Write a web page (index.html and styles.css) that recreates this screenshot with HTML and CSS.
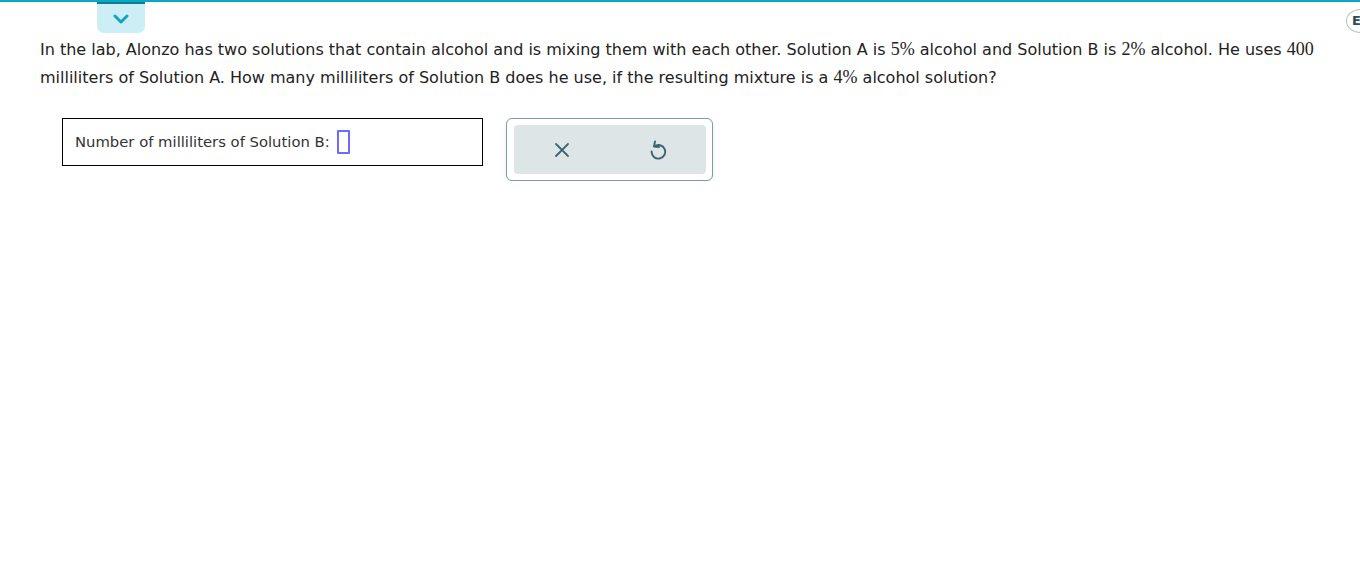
FILE: index.html
```html
<!DOCTYPE html>
<html>
<head>
<meta charset="utf-8">
<link rel="stylesheet" href="styles.css">
</head>
<body>
<div class="topbar">
  <div class="tab">
    <svg width="16" height="10" viewBox="0 0 16 10"><path d="M2 2 L8 8 L14 2" fill="none" stroke="#12a5c3" stroke-width="3" stroke-linecap="round" stroke-linejoin="round"/></svg>
  </div>
  <div class="badge">E</div>
</div>
<main class="content">
  <p class="question">In the lab, Alonzo has two solutions that contain alcohol and is mixing them with each other. Solution A is <span class="m">5%</span> alcohol and Solution B is <span class="m">2%</span> alcohol. He uses <span class="m">400</span> milliliters of Solution A. How many milliliters of Solution B does he use, if the resulting mixture is a <span class="m">4%</span> alcohol solution?</p>
  <div class="answer-row">
    <div class="answer-box">
      <span class="label">Number of milliliters of Solution B:</span>
      <span class="input"></span>
    </div>
    <div class="tools">
      <div class="tools-inner">
        <svg width="16" height="16" viewBox="0 0 16 16"><path d="M2 2 L14 14 M14 2 L2 14" stroke="#3d6472" stroke-width="1.8" fill="none" stroke-linecap="round"/></svg>
        <svg width="18" height="20" viewBox="0 0 18 20"><path d="M6 1.5 L5 6.5 L10 7" fill="none" stroke="#3d6472" stroke-width="1.9" stroke-linecap="round" stroke-linejoin="round"/><path d="M5.4 6.3 A6.8 6.8 0 1 1 2.6 11.5" fill="none" stroke="#3d6472" stroke-width="1.9" stroke-linecap="round"/></svg>
      </div>
    </div>
  </div>
</main>
</body>
</html>
```
FILE: styles.css
```css
html, body {
  margin: 0;
  padding: 0;
  background: #fff;
}
body {
  font-family: "DejaVu Sans", Verdana, sans-serif;
  color: #222;
}
.topbar {
  position: relative;
  height: 34px;
  border-top: 2px solid #0aa8c4;
}
.tab {
  position: absolute;
  left: 97px;
  top: 0;
  width: 48px;
  height: 31px;
  background: #cdeef4;
  border-top: 2px solid #0b7f93;
  box-sizing: border-box;
  border-radius: 0 0 7px 7px;
  display: flex;
  align-items: center;
  justify-content: center;
}
.badge {
  position: absolute;
  left: 1346px;
  top: 7px;
  width: 22px;
  height: 22px;
  border: 1px solid #b5c3c8;
  border-radius: 50%;
  font-size: 13px;
  font-weight: bold;
  color: #2e4a55;
  line-height: 22px;
  padding-left: 5px;
  box-sizing: content-box;
}
.content {
  padding: 0 40px;
}
.question {
  margin: 0;
  font-size: 16px;
  line-height: 28px;
  color: #222;
}
.m {
  font-family: "Liberation Serif", "Times New Roman", serif;
  font-size: 18px;
  line-height: 1;
}
.answer-row {
  display: flex;
  align-items: flex-start;
  gap: 23px;
  margin-top: 26px;
  padding-left: 22px;
}
.answer-box {
  width: 421px;
  height: 48px;
  box-sizing: border-box;
  border: 1px solid #000;
  display: flex;
  align-items: center;
  padding-left: 12px;
  gap: 7px;
}
.label {
  font-size: 14.8px;
  color: #333;
  margin-top: -2px;
}
.input {
  width: 9px;
  height: 20px;
  border: 2px solid #6b6bff;
  border-radius: 1px;
}
.tools {
  width: 207px;
  height: 63px;
  box-sizing: border-box;
  border: 1px solid #7d9ca6;
  border-radius: 6px;
  background: #fff;
  padding: 6px 6px 6px 7px;
  box-shadow: 0 2px 4px rgba(0,0,0,0.08);
}
.tools-inner {
  height: 100%;
  background: #dee5e7;
  border-radius: 4px;
  display: flex;
  align-items: center;
  justify-content: space-around;
}
```
